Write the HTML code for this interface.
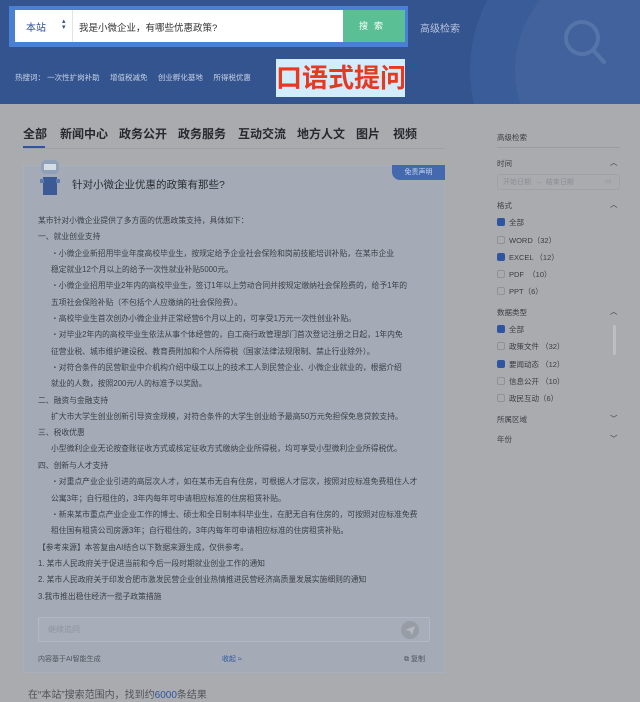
<!DOCTYPE html>
<html><head><meta charset="utf-8"><style>
*{margin:0;padding:0;box-sizing:border-box}
body{width:640px;height:702px;overflow:hidden;background:#a9abaf;font-family:"Liberation Sans","Noto Sans CJK SC",sans-serif;position:relative;color:#3b3e45}
.a{position:absolute;white-space:nowrap}
#hd{position:absolute;left:0;top:0;width:640px;height:104px;background:#33548f;overflow:hidden}
.c1{position:absolute;left:470px;top:-80px;width:300px;height:300px;border-radius:50%;background:#3a5c98}
.c2{position:absolute;left:515px;top:-40px;width:220px;height:220px;border-radius:50%;background:#41629c}
.t{font-size:7.8px;line-height:16px}
.cb{position:absolute;width:8px;height:8px;border:1px solid #8e9299;border-radius:2px;background:transparent}
.cb.on{background:#2f55a0;border-color:#2f55a0}
.sb{font-size:7.5px;color:#3a3d44}
</style></head><body>
<div id="hd">
<div class="c1"></div><div class="c2"></div>
<svg class="a" style="left:560px;top:16px" width="50" height="52"><circle cx="22" cy="22" r="16" fill="none" stroke="#5574aa" stroke-width="4"/><line x1="34" y1="35" x2="44" y2="46" stroke="#5574aa" stroke-width="4" stroke-linecap="round"/></svg>
<div class="a" style="left:9px;top:6px;width:399px;height:41px;background:#4a7fd6"></div>
<div class="a" style="left:15px;top:10px;width:328px;height:32px;background:#fff"></div>
<div class="a" style="left:72px;top:10px;width:1px;height:32px;background:#e3e3e3"></div>
<div class="a" style="left:26px;top:19px;font-size:10px;color:#2d4f8f">本站</div>
<div class="a" style="left:62px;top:19px;font-size:7px;color:#2d4f8f;line-height:6px">▴<br>▾</div>
<div class="a" style="left:79px;top:20px;font-size:9.5px;color:#333">我是小微企业，有哪些优惠政策?</div>
<div class="a" style="left:343px;top:10px;width:62px;height:32px;background:#5bbf95;color:#fff;font-size:9px;text-align:center;line-height:32px;letter-spacing:6px">搜索</div>
<div class="a" style="left:420px;top:20px;font-size:10px;color:#b8c4db">高级检索</div>
<div class="a" style="left:15px;top:72px;font-size:7.5px;color:#c8d2e4">热搜词：&nbsp;一次性扩岗补助&nbsp;&nbsp;&nbsp;&nbsp; 增值税减免&nbsp;&nbsp;&nbsp;&nbsp; 创业孵化基地&nbsp;&nbsp;&nbsp;&nbsp; 所得税优惠</div>
<div class="a" style="left:276px;top:59px;width:129px;height:38px;background:#d3ecfb;color:#e8391f;font-size:26px;font-weight:bold;line-height:38px;text-align:center">口语式提问</div>
</div>
<div class="a" style="left:23px;top:125px;font-size:12px;font-weight:bold;color:#26292f">全部</div>
<div class="a" style="left:60px;top:125px;font-size:12px;font-weight:bold;color:#26292f">新闻中心</div>
<div class="a" style="left:119px;top:125px;font-size:12px;font-weight:bold;color:#26292f">政务公开</div>
<div class="a" style="left:178px;top:125px;font-size:12px;font-weight:bold;color:#26292f">政务服务</div>
<div class="a" style="left:238px;top:125px;font-size:12px;font-weight:bold;color:#26292f">互动交流</div>
<div class="a" style="left:297px;top:125px;font-size:12px;font-weight:bold;color:#26292f">地方人文</div>
<div class="a" style="left:356px;top:125px;font-size:12px;font-weight:bold;color:#26292f">图片</div>
<div class="a" style="left:393px;top:125px;font-size:12px;font-weight:bold;color:#26292f">视频</div>
<div class="a" style="left:23px;top:148px;width:422px;height:1px;background:#9ea1a7"></div>
<div class="a" style="left:23px;top:146px;width:22px;height:2px;background:#2f55a0"></div>
<div class="a" style="left:23px;top:165px;width:422px;height:508px;background:#a4aab6;border:1px solid #a9afbb"></div>
<div class="a" style="left:392px;top:165px;width:53px;height:15px;background:#4569ae;border-radius:0 0 0 8px;color:#c9d6ee;font-size:7px;text-align:center;line-height:15px">免责声明</div>
<svg class="a" style="left:38px;top:157px" width="24" height="40"><rect x="3" y="3" width="18" height="14" rx="5" fill="#8fa0b8"/><rect x="6" y="7" width="12" height="6" fill="#d6dce4"/><rect x="5" y="20" width="14" height="18" fill="#3c5a94"/><rect x="2" y="22" width="4" height="4" fill="#5c7ab0"/><rect x="18" y="22" width="4" height="4" fill="#5c7ab0"/></svg>
<div class="a" style="left:72px;top:177px;font-size:10.5px;color:#2a2d33">针对小微企业优惠的政策有那些?</div>
<div class="a t" style="left:38px;top:213px">某市针对小微企业提供了多方面的优惠政策支持，具体如下：</div>
<div class="a t" style="left:38px;top:229px">一、就业创业支持</div>
<div class="a t" style="left:51px;top:246px">・小微企业新招用毕业年度高校毕业生，按规定给予企业社会保险和岗前技能培训补贴，在某市企业</div>
<div class="a t" style="left:51px;top:262px">稳定就业12个月以上的给予一次性就业补贴5000元。</div>
<div class="a t" style="left:51px;top:278px">・小微企业招用毕业2年内的高校毕业生，签订1年以上劳动合同并按规定缴纳社会保险费的，给予1年的</div>
<div class="a t" style="left:51px;top:295px">五项社会保险补贴（不包括个人应缴纳的社会保险费）。</div>
<div class="a t" style="left:51px;top:311px">・高校毕业生首次创办小微企业并正常经营6个月以上的，可享受1万元一次性创业补贴。</div>
<div class="a t" style="left:51px;top:327px">・对毕业2年内的高校毕业生依法从事个体经营的，自工商行政管理部门首次登记注册之日起，1年内免</div>
<div class="a t" style="left:51px;top:344px">征营业税、城市维护建设税、教育费附加和个人所得税（国家法律法规限制、禁止行业除外）。</div>
<div class="a t" style="left:51px;top:360px">・对符合条件的民营职业中介机构介绍中级工以上的技术工人到民营企业、小微企业就业的，根据介绍</div>
<div class="a t" style="left:51px;top:376px">就业的人数，按照200元/人的标准予以奖励。</div>
<div class="a t" style="left:38px;top:393px">二、融资与金融支持</div>
<div class="a t" style="left:51px;top:409px">扩大市大学生创业创新引导资金规模，对符合条件的大学生创业给予最高50万元免担保免息贷款支持。</div>
<div class="a t" style="left:38px;top:425px">三、税收优惠</div>
<div class="a t" style="left:51px;top:441px">小型微利企业无论按查账征收方式或核定征收方式缴纳企业所得税，均可享受小型微利企业所得税优。</div>
<div class="a t" style="left:38px;top:458px">四、创新与人才支持</div>
<div class="a t" style="left:51px;top:474px">・对重点产业企业引进的高层次人才，如在某市无自有住房，可根据人才层次，按照对应标准免费租住人才</div>
<div class="a t" style="left:51px;top:491px">公寓3年；自行租住的，3年内每年可申请相应标准的住房租赁补贴。</div>
<div class="a t" style="left:51px;top:507px">・新来某市重点产业企业工作的博士、硕士和全日制本科毕业生，在肥无自有住房的，可按照对应标准免费</div>
<div class="a t" style="left:51px;top:523px">租住国有租赁公司房源3年；自行租住的，3年内每年可申请相应标准的住房租赁补贴。</div>
<div class="a t" style="left:38px;top:540px">【参考来源】本答复由AI结合以下数据来源生成，仅供参考。</div>
<div class="a t" style="left:38px;top:556px">1. 某市人民政府关于促进当前和今后一段时期就业创业工作的通知</div>
<div class="a t" style="left:38px;top:572px">2. 某市人民政府关于印发合肥市激发民营企业创业热情推进民营经济高质量发展实施细则的通知</div>
<div class="a t" style="left:38px;top:589px">3.我市推出稳住经济一揽子政策措施</div>
<div class="a" style="left:38px;top:617px;width:392px;height:25px;border:1px solid #b3b9c4;border-radius:2px;background:#a7adb9"></div>
<div class="a" style="left:48px;top:624px;font-size:8px;color:#8f949c">继续追问</div>
<svg class="a" style="left:400px;top:620px" width="20" height="20"><circle cx="10" cy="10" r="9" fill="#979ca5"/><path d="M5 10 L15 6 L12 15 L10 11 Z" fill="#b4b8bf"/></svg>
<div class="a" style="left:38px;top:654px;font-size:7px;color:#50545b">内容基于AI智能生成</div>
<div class="a" style="left:222px;top:654px;font-size:7px;color:#2f55a0">收起 ≈</div>
<div class="a" style="left:404px;top:654px;font-size:7px;color:#50545b">⧉ 复制</div>
<div class="a" style="left:28px;top:686px;font-size:10px;color:#50545b">在“本站”搜索范围内，找到约<span style="color:#2f55a0">6000</span>条结果</div>
<div class="a sb" style="left:497px;top:132px">高级检索</div>
<div class="a" style="left:497px;top:147px;width:123px;height:1px;background:#9a9da3"></div>
<div class="a sb" style="left:497px;top:158px">时间</div><div class="a sb" style="left:610px;top:157px">︿</div>
<div class="a" style="left:497px;top:174px;width:123px;height:16px;border:1px solid #9ea1a7;border-radius:3px"></div>
<div class="a" style="left:503px;top:177px;font-size:7px;color:#8a8e95">开始日期 &nbsp;→&nbsp; 结束日期</div>
<div class="a" style="left:605px;top:177px;font-size:7px;color:#8a8e95">▭</div>
<div class="a sb" style="left:497px;top:200px">格式</div><div class="a sb" style="left:610px;top:199px">︿</div>
<div class="cb on" style="left:497px;top:218px"></div><div class="a sb" style="left:509px;top:217px">全部</div>
<div class="cb" style="left:497px;top:236px"></div><div class="a sb" style="left:509px;top:235px">WORD（32）</div>
<div class="cb on" style="left:497px;top:253px"></div><div class="a sb" style="left:509px;top:252px">EXCEL （12）</div>
<div class="cb" style="left:497px;top:270px"></div><div class="a sb" style="left:509px;top:269px">PDF &nbsp;（10）</div>
<div class="cb" style="left:497px;top:287px"></div><div class="a sb" style="left:509px;top:286px">PPT（6）</div>
<div class="a sb" style="left:497px;top:307px">数据类型</div><div class="a sb" style="left:610px;top:306px">︿</div>
<div class="a" style="left:613px;top:325px;width:3px;height:30px;background:#bcbec2;border-radius:2px"></div>
<div class="cb on" style="left:497px;top:325px"></div><div class="a sb" style="left:509px;top:324px">全部</div>
<div class="cb" style="left:497px;top:342px"></div><div class="a sb" style="left:509px;top:341px">政策文件 （32）</div>
<div class="cb on" style="left:497px;top:360px"></div><div class="a sb" style="left:509px;top:359px">要闻动态 （12）</div>
<div class="cb" style="left:497px;top:377px"></div><div class="a sb" style="left:509px;top:376px">信息公开 （10）</div>
<div class="cb" style="left:497px;top:394px"></div><div class="a sb" style="left:509px;top:393px">政民互动（6）</div>
<div class="a sb" style="left:497px;top:414px">所属区域</div><div class="a sb" style="left:610px;top:413px">﹀</div>
<div class="a sb" style="left:497px;top:434px">年份</div><div class="a sb" style="left:610px;top:433px">﹀</div>
</body></html>
